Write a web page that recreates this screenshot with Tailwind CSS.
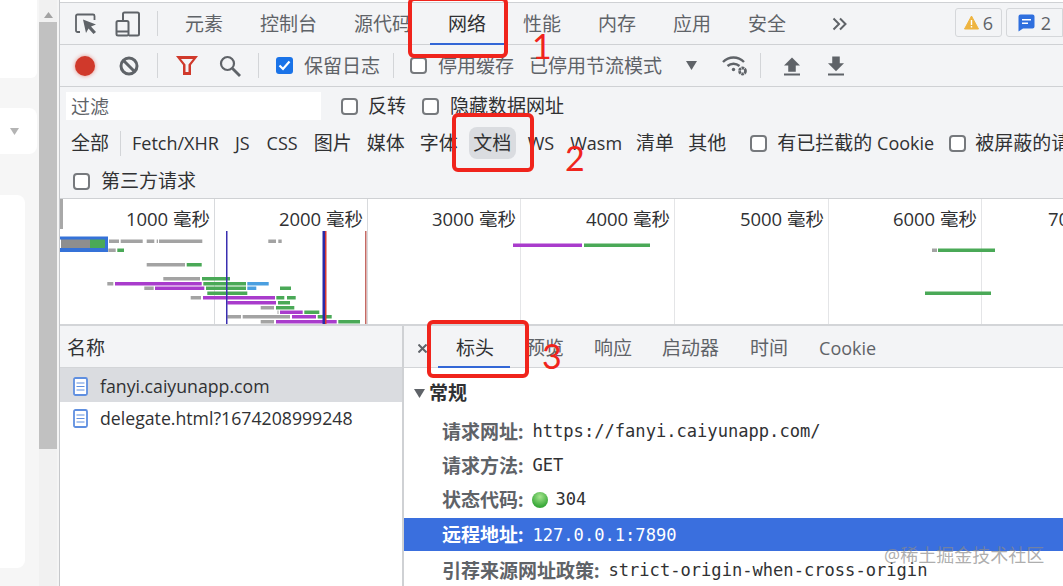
<!DOCTYPE html>
<html lang="zh">
<head>
<meta charset="utf-8">
<script src="https://cdn.jsdelivr.net/npm/@tailwindcss/browser@4"></script>
</head>
<body class="m-0 bg-white">
<div class="relative flex w-[1063px] h-[586px] overflow-hidden bg-white text-[19px] leading-none text-[#303133] font-['Open_Sans','Noto_Sans_CJK_SC',sans-serif]">

  <!-- page behind devtools -->
  <div class="w-[39px] h-full shrink-0 bg-[#f6f6f6] flex flex-col">
    <div class="h-[78px] w-[37px] bg-white rounded-br-md"></div>
    <div class="mt-[30px] h-[46px] w-[37px] bg-white rounded-r-lg flex items-center justify-end pr-[18px]">
      <svg width="9" height="7" viewBox="0 0 9 7"><path d="M0 0h9L4.500 7z" fill="#b4b4b4"/></svg>
    </div>
    <div class="mt-[41px] h-[373px] w-[25px] bg-white rounded-r-lg"></div>
  </div>

  <!-- scrollbar -->
  <div class="w-[18px] h-full shrink-0 bg-[#f1f1f1] flex flex-col items-center">
    <svg class="mt-[12px] mb-[4px]" width="9" height="6" viewBox="0 0 9 6"><path d="M4.500 0L9 6H0z" fill="#a3a3a3"/></svg>
    <div class="w-full h-[427px] bg-[#c1c1c1]"></div>
  </div>
  <div class="w-[2px] h-full shrink-0 bg-[#f5f5f5]"></div>

  <!-- devtools -->
  <div class="flex-1 min-w-0 h-full flex flex-col border-l border-[#c6c8cb] pt-[2px]">

    <!-- tabs -->
    <div class="h-[43px] shrink-0 flex items-center border-y border-[#cfd1d4] bg-[#f3f4f6] text-[#5f6368] relative">
      <svg class="ml-[14px]" width="24" height="24" viewBox="0 0 24 24" fill="none">
        <path d="M6 20H3.500a1.500 1.500 0 0 1-1.500-1.500V4a1.500 1.500 0 0 1 1.500-1.500H19A1.500 1.500 0 0 1 20.500 4v4" stroke="#5f6368" stroke-width="1.800"/>
        <path d="M9 7.500l13 5-5 2 5 5.500-2.500 2-5-5.500-2.500 4.500z" fill="#5f6368"/>
      </svg>
      <svg class="ml-[17px]" width="26" height="26" viewBox="0 0 26 26" fill="none" stroke="#5f6368" stroke-width="2">
        <path d="M8 10V3a1.500 1.500 0 0 1 1.500-1.500h13A1.500 1.500 0 0 1 24 3v20a1.500 1.500 0 0 1-1.500 1.500H14"/>
        <rect x="1.500" y="10" width="12" height="14.500" rx="1.500"/>
        <path d="M1.500 20.500h12"/>
      </svg>
      <div class="ml-[16px] w-px h-[25px] bg-[#d3d5d8]"></div>
      <div class="ml-[27px] pt-[1px] flex items-center gap-[37px]">
        <span>元素</span><span>控制台</span><span>源代码</span><span class="text-[#303133]">网络</span><span>性能</span><span>内存</span><span>应用</span><span>安全</span>
      </div>
      <svg class="ml-[46px]" width="15" height="14" viewBox="0 0 15 14" fill="none" stroke="#5f6368" stroke-width="2"><path d="M1.500 1.500L7 7l-5.500 5.500M8 1.500L13.500 7 8 12.500"/></svg>
      <div class="absolute left-[895px] top-[5px] w-[47px] h-[29px] rounded-[3px] border border-[#d5d7da] flex items-center justify-center gap-[4px] text-[18px]">
        <svg width="15" height="15" viewBox="0 0 15 15"><path d="M7.500 1L14.500 14H.5z" fill="#eeb440" stroke="#eeb440" stroke-linejoin="round"/><path d="M6.800 5h1.400v5H6.800zM6.800 11h1.400v1.500H6.800z" fill="#fff"/></svg>
        <span>6</span>
      </div>
      <div class="absolute left-[946px] top-[5px] w-[57px] h-[29px] rounded-l-[3px] border border-[#d5d7da] flex items-center justify-center gap-[6px] text-[18px]">
        <svg width="17" height="18" viewBox="0 0 17 18"><path d="M2.500 0.500h12a2 2 0 0 1 2 2v10a2 2 0 0 1-2 2H5L.5 17.500V2.500a2 2 0 0 1 2-2z" fill="#2f6fde"/><path d="M4 5h9v1.500H4zM4 8.500h6V10H4z" fill="#fff"/></svg>
        <span>2</span>
      </div>
      <div class="absolute left-[370px] bottom-[-1px] w-[74px] h-[2px] bg-[#3367d6]"></div>
    </div>

    <!-- toolbar -->
    <div class="h-[42px] shrink-0 flex items-center border-b border-[#cfd1d4] bg-[#f3f4f6] text-[#5f6368]">
      <div class="ml-[15px] w-[20px] h-[20px] rounded-full bg-[#d0392b] shadow-[0_0_4px_#e58a80]"></div>
      <svg class="ml-[24px]" width="20" height="20" viewBox="0 0 20 20" fill="none" stroke="#5f6368" stroke-width="3"><circle cx="10" cy="10" r="8"/><path d="M4.500 4.500l11 11"/></svg>
      <div class="ml-[18px] w-px h-[25px] bg-[#d3d5d8]"></div>
      <svg class="ml-[18px]" width="22" height="19" viewBox="0 0 22 19"><path fill-rule="evenodd" d="M0 0h22l-7 9v10H7V9zM5 3l4.500 5.500V16h3V8.500L17 3z" fill="#d0392b"/></svg>
      <svg class="ml-[21px]" width="22" height="22" viewBox="0 0 22 22" fill="none" stroke="#5f6368"><circle cx="8.500" cy="8.500" r="6.500" stroke-width="2.200"/><path d="M13.500 13.500L21 21" stroke-width="2.800"/></svg>
      <div class="ml-[17px] w-px h-[25px] bg-[#d3d5d8]"></div>
      <span class="ml-[17px] w-[17px] h-[17px] shrink-0 rounded-[3px] bg-[#1a73e8] flex items-center justify-center">
        <svg width="13" height="13" viewBox="0 0 13 13" fill="none" stroke="#fff" stroke-width="2.200"><path d="M1.500 6.500l3.500 3.500 6.500-7.500"/></svg>
      </span>
      <span class="ml-[11px] pt-[1px]">保留日志</span>
      <div class="ml-[13px] w-px h-[25px] bg-[#d3d5d8]"></div>
      <span class="ml-[16px] w-[17px] h-[17px] shrink-0 rounded-[4px] border-2 border-[#76797d] bg-white"></span>
      <span class="ml-[11px] pt-[1px]">停用缓存</span>
      <span class="ml-[15px] pt-[1px]">已停用节流模式</span>
      <svg class="ml-[24px]" width="11" height="9" viewBox="0 0 11 9"><path d="M0 0h11L5.500 9z" fill="#5f6368"/></svg>
      <svg class="ml-[25px]" width="27" height="23" viewBox="0 0 27 23" fill="none" stroke="#5f6368" stroke-width="2.400">
        <path d="M1 8c6-6 15-6 21 0M5.500 12c3.500-3 8.500-3 12 0"/>
        <circle cx="11.500" cy="15.500" r="1.700" fill="#5f6368" stroke="none"/>
        <circle cx="20.500" cy="17" r="3" stroke-width="2.800" stroke-dasharray="2.600 .6"/>
      </svg>
      <div class="ml-[11px] w-px h-[25px] bg-[#d3d5d8]"></div>
      <svg class="ml-[23px]" width="16" height="20" viewBox="0 0 17 20"><path d="M8.500 1L17 9.500h-4.500V16h-8V9.500H0zM0 18h17v2H0z" fill="#5f6368"/></svg>
      <svg class="ml-[28px]" width="16" height="20" viewBox="0 0 17 20"><path d="M4.500 0h8v7H17L8.500 15.500 0 7h4.500zM0 18h17v2H0z" fill="#5f6368"/></svg>
    </div>

    <!-- filters -->
    <div class="h-[112px] shrink-0 flex flex-col border-b border-[#cfd1d4] bg-[#f3f4f6]">
      <div class="h-[37px] shrink-0 flex items-center pt-[1px]">
        <div class="ml-[6px] w-[255px] h-[28px] bg-white flex items-center pl-[5px] pt-[2px] text-[#5f6368]">过滤</div>
        <span class="ml-[20px] w-[17px] h-[17px] shrink-0 rounded-[4px] border-2 border-[#76797d] bg-white"></span>
        <span class="ml-[10px]">反转</span>
        <span class="ml-[16px] w-[17px] h-[17px] shrink-0 rounded-[4px] border-2 border-[#76797d] bg-white"></span>
        <span class="ml-[11px]">隐藏数据网址</span>
      </div>
      <div class="h-[38px] shrink-0 flex items-center whitespace-nowrap overflow-hidden">
        <span class="ml-[11px]">全部</span>
        <div class="ml-[11px] w-px h-[25px] bg-[#d3d5d8] shrink-0"></div>
        <span class="ml-[11px] text-[18px]">Fetch/XHR</span>
        <span class="ml-[16px] text-[18px]">JS</span>
        <span class="ml-[17px] text-[18px]">CSS</span>
        <span class="ml-[16px]">图片</span>
        <span class="ml-[15px]">媒体</span>
        <span class="ml-[15px]">字体</span>
        <span class="ml-[11px] px-[4.500px] h-[32px] flex items-center rounded-[8px] bg-[#dadce0]">文档</span>
        <span class="ml-[12px] text-[18px]">WS</span>
        <span class="ml-[16px] text-[18px]">Wasm</span>
        <span class="ml-[14px]">清单</span>
        <span class="ml-[14px]">其他</span>
        <span class="ml-[24px] w-[17px] h-[17px] shrink-0 rounded-[4px] border-2 border-[#76797d] bg-white"></span>
        <span class="ml-[10px]">有已拦截的 <span class="text-[18px]">Cookie</span></span>
        <span class="ml-[15px] w-[17px] h-[17px] rounded-[4px] border-2 border-[#76797d] bg-white shrink-0"></span>
        <span class="ml-[9px]">被屏蔽的请求</span>
      </div>
      <div class="flex-1 flex items-center pt-[2px]">
        <span class="ml-[13px] w-[17px] h-[17px] shrink-0 rounded-[4px] border-2 border-[#76797d] bg-white"></span>
        <span class="ml-[11px]">第三方请求</span>
      </div>
    </div>

    <!-- timeline overview -->
    <div class="relative h-[127px] shrink-0 flex bg-white border-b-2 border-[#d3d5d8] whitespace-nowrap overflow-hidden text-[18.500px]">
      <div class="w-[155px] shrink-0 h-full border-r border-[#d8dadd] text-right pr-[4px] pt-[11px]">1000 毫秒</div>
      <div class="w-[153px] shrink-0 h-full border-r border-[#d8dadd] text-right pr-[4px] pt-[11px]">2000 毫秒</div>
      <div class="w-[153px] shrink-0 h-full border-r border-[#e4e5e7] text-right pr-[4px] pt-[11px]">3000 毫秒</div>
      <div class="w-[154px] shrink-0 h-full border-r border-[#e4e5e7] text-right pr-[4px] pt-[11px]">4000 毫秒</div>
      <div class="w-[154px] shrink-0 h-full border-r border-[#e4e5e7] text-right pr-[4px] pt-[11px]">5000 毫秒</div>
      <div class="w-[153px] shrink-0 h-full border-r border-[#e4e5e7] text-right pr-[4px] pt-[11px]">6000 毫秒</div>
      <div class="w-[81px] shrink-0 h-full overflow-hidden pl-[66px] pt-[11px]">7000 毫秒</div>
      <svg class="absolute left-0 top-0" width="1003" height="127" viewBox="60 199 1003 127">
        <rect x="60" y="199" width="3" height="30" fill="#a8a8a8"/>
        <g fill="#a3a3a3">
          <rect x="109" y="239.500" width="10" height="3.500"/><rect x="120.700" y="239.500" width="22" height="3.500"/><rect x="146.700" y="239.500" width="7.600" height="3.500"/><rect x="156.700" y="239.500" width="1.300" height="3.500"/><rect x="159" y="239.500" width="43.300" height="3.500"/><rect x="268.300" y="239.500" width="7.700" height="3.500"/><rect x="278.300" y="239.500" width="3.400" height="3.500"/>
          <rect x="108.300" y="248.500" width="7.400" height="3.500"/><rect x="146.700" y="263" width="38.300" height="3.500"/><rect x="163.300" y="277" width="36.700" height="3.500"/><rect x="107.300" y="282" width="6" height="3.500"/><rect x="144.300" y="286.500" width="9.400" height="3.500"/><rect x="190.700" y="296" width="10.300" height="3.500"/><rect x="260.700" y="306" width="13.300" height="3.500"/><rect x="227.300" y="315" width="13.700" height="3.500"/><rect x="242.700" y="315" width="47.300" height="3.500"/><rect x="260.700" y="320" width="13.300" height="3.500"/><rect x="277.500" y="310.500" width="1" height="3.500"/><rect x="932" y="248.500" width="5" height="3.500"/>
        </g>
        <g fill="#a93ccc">
          <rect x="115" y="282" width="86.700" height="3.500"/><rect x="155" y="286.500" width="49.300" height="3.500"/><rect x="203" y="296" width="72" height="3.500"/><rect x="227.300" y="301" width="48.700" height="3.500"/><rect x="280" y="310.500" width="22.700" height="3.500"/><rect x="292" y="315" width="24" height="3.500"/><rect x="276" y="320" width="60.700" height="3.500"/><rect x="513" y="243.500" width="69" height="3.500"/>
        </g>
        <g fill="#4aa957">
          <rect x="117.300" y="248.500" width="6.700" height="3.500"/><rect x="186.700" y="263" width="15" height="3.500"/><rect x="202" y="277" width="28" height="3.500"/><rect x="203.300" y="282" width="42.700" height="3.500"/><rect x="206" y="286.500" width="40" height="3.500"/><rect x="280" y="286.500" width="11" height="3.500"/><rect x="207.300" y="291.500" width="40" height="3.500"/><rect x="276.300" y="296" width="8" height="3.500"/><rect x="287" y="296" width="8.700" height="3.500"/><rect x="278" y="301" width="12" height="3.500"/><rect x="276" y="306" width="18.300" height="3.500"/><rect x="304.300" y="310.500" width="15" height="3.500"/><rect x="317.700" y="315" width="14" height="3.500"/><rect x="338.300" y="320" width="21.700" height="3.500"/><rect x="584" y="243.500" width="66" height="3.500"/><rect x="938" y="248.500" width="57" height="3.500"/><rect x="925" y="291.500" width="66" height="3.500"/>
        </g>
        <g fill="#4a9fe0">
          <rect x="247.300" y="282" width="21.400" height="3.500"/><rect x="247.300" y="286.500" width="9" height="3.500"/>
        </g>
        <rect x="61" y="239" width="29" height="9" fill="#8e8e8e"/>
        <rect x="90" y="239" width="15" height="9" fill="#4aa957"/>
        <path d="M60 236.500h48v15.500H60v-4h45v-8.500H60z" fill="#3572d8"/>
        <rect x="226" y="231" width="1.500" height="96" fill="#3a2fb0"/>
        <rect x="322.500" y="231" width="2.500" height="96" fill="#2a2aa8"/>
        <rect x="325" y="231" width="1.500" height="96" fill="#d63a34"/>
        <rect x="365" y="231" width="1.500" height="96" fill="#c46a64"/>
      </svg>
    </div>

    <!-- bottom split -->
    <div class="flex-1 min-h-0 flex bg-white">
      <div class="w-[344px] shrink-0 border-r-2 border-[#cfd1d4] flex flex-col">
        <div class="h-[42px] shrink-0 flex items-center pl-[7px] pt-[4px] bg-[#f3f4f6] border-b border-[#d3d5d8]">名称</div>
        <div class="h-[34px] shrink-0 flex items-center pl-[13px] pt-[3px] bg-[#dadce0]">
          <svg width="15" height="19" viewBox="0 0 15 19" fill="none"><rect x="1" y="1" width="13" height="17" rx="1.500" fill="#fff" stroke="#5f8fe0" stroke-width="1.800"/><path d="M3.500 6h8M3.500 9.500h8M3.500 13h8" stroke="#5f8fe0" stroke-width="1.200"/></svg>
          <span class="ml-[12px] text-[17.700px]">fanyi.caiyunapp.com</span>
        </div>
        <div class="h-[33px] shrink-0 flex items-center pl-[13px]">
          <svg width="15" height="19" viewBox="0 0 15 19" fill="none"><rect x="1" y="1" width="13" height="17" rx="1.500" fill="#fff" stroke="#5f8fe0" stroke-width="1.800"/><path d="M3.500 6h8M3.500 9.500h8M3.500 13h8" stroke="#5f8fe0" stroke-width="1.200"/></svg>
          <span class="ml-[12px] text-[17.700px]">delegate.html?1674208999248</span>
        </div>
      </div>

      <div class="flex-1 min-w-0 flex flex-col">
        <div class="relative h-[42px] shrink-0 flex items-center pt-[3px] bg-[#f3f4f6] border-b border-[#d3d5d8] text-[#5f6368]">
          <svg class="ml-[14px]" width="9" height="9" viewBox="0 0 9 9" stroke="#5f6368" stroke-width="2"><path d="M.5.500l8 8M8.500.500l-8 8"/></svg>
          <span class="ml-[29px] text-[#303133]">标头</span>
          <span class="ml-[32px]">预览</span>
          <span class="ml-[30px]">响应</span>
          <span class="ml-[30px]">启动器</span>
          <span class="ml-[31px]">时间</span>
          <span class="ml-[31px] text-[18px]">Cookie</span>
          <div class="absolute left-[34px] bottom-[-1px] w-[72px] h-[2px] bg-[#3367d6]"></div>
        </div>
        <div class="h-[31px] mt-[10px] shrink-0 flex items-center pl-[10px] font-bold text-[#303133]">
          <svg width="11" height="9" viewBox="0 0 11 9"><path d="M0 0h11L5.500 9z" fill="#5f6368"/></svg>
          <span class="ml-[4px]">常规</span>
        </div>
        <div class="mt-[6px] h-[34px] shrink-0 flex items-center pl-[38px]">
          <span class="font-bold text-[#5f6368]">请求网址:</span>
          <span class="ml-[9px] text-[17.100px] font-['DejaVu_Sans_Mono',monospace]">https://fanyi.caiyunapp.com/</span>
        </div>
        <div class="h-[34px] shrink-0 flex items-center pl-[38px]">
          <span class="font-bold text-[#5f6368]">请求方法:</span>
          <span class="ml-[9px] text-[17.100px] font-['DejaVu_Sans_Mono',monospace]">GET</span>
        </div>
        <div class="h-[34px] shrink-0 flex items-center pl-[38px]">
          <span class="font-bold text-[#5f6368]">状态代码:</span>
          <span class="ml-[9px] w-[16px] h-[16px] rounded-full bg-[radial-gradient(circle_at_50%_30%,#a5e58e,#3aa93a_70%)]"></span>
          <span class="ml-[7px] text-[17.100px] font-['DejaVu_Sans_Mono',monospace]">304</span>
        </div>
        <div class="h-[33px] mt-[1px] pt-[2px] shrink-0 flex items-center pl-[38px] bg-[#3a6fde] text-white">
          <span class="font-bold">远程地址:</span>
          <span class="ml-[9px] text-[17.100px] font-['DejaVu_Sans_Mono',monospace]">127.0.0.1:7890</span>
        </div>
        <div class="h-[38px] pt-[2px] shrink-0 flex items-center pl-[38px]">
          <span class="font-bold text-[#5f6368]">引荐来源网址政策:</span>
          <span class="ml-[9px] text-[17.100px] font-['DejaVu_Sans_Mono',monospace]">strict-origin-when-cross-origin</span>
        </div>
      </div>
    </div>
  </div>

  <!-- hand-drawn annotations -->
  <div class="absolute left-[408px] top-[-3px] w-[100px] h-[61px] rounded-[6px] border-[4px] border-[#f0241c]"></div>
  <div class="absolute left-[452px] top-[113px] w-[82px] h-[59px] rounded-[6px] border-[4px] border-[#f0241c]"></div>
  <div class="absolute left-[427px] top-[320px] w-[102px] h-[58px] rounded-[6px] border-[4px] border-[#f0241c]"></div>
  <span class="absolute left-[532px] top-[29px] text-[34px] leading-none text-[#f0241c] font-['Lato',sans-serif]">1</span>
  <span class="absolute left-[565px] top-[141px] text-[34px] leading-none text-[#f0241c] font-['Lato',sans-serif]">2</span>
  <span class="absolute left-[542px] top-[339px] text-[34px] leading-none text-[#f0241c] font-['Lato',sans-serif]">3</span>
  <span class="absolute left-[884px] top-[546px] text-[18px] leading-none text-[#8a8a8a]/70 whitespace-nowrap">@稀土掘金技术社区</span>
</div>
</body>
</html>
